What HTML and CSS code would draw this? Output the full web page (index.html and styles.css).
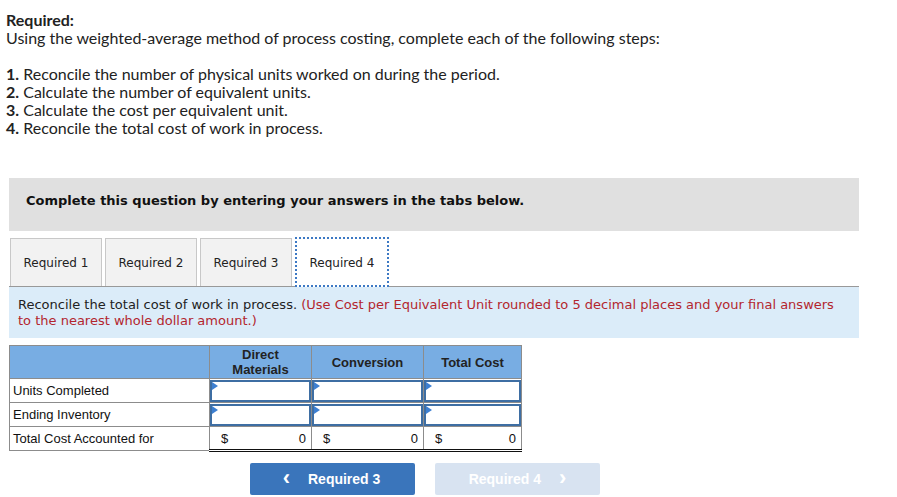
FILE: index.html
```html
<!DOCTYPE html>
<html>
<head>
<meta charset="utf-8">
<link rel="stylesheet" href="styles.css">
</head>
<body>
<div class="intro">
  <p class="req-title">Required:</p>
  <p>Using the weighted-average method of process costing, complete each of the following steps:</p>
  <ol class="steps">
    <li><b>1.</b> Reconcile the number of physical units worked on during the period.</li>
    <li><b>2.</b> Calculate the number of equivalent units.</li>
    <li><b>3.</b> Calculate the cost per equivalent unit.</li>
    <li><b>4.</b> Reconcile the total cost of work in process.</li>
  </ol>
</div>

<div class="panel">
  <div class="banner">Complete this question by entering your answers in the tabs below.</div>
  <div class="tabs">
    <div class="tab">Required 1</div>
    <div class="tab">Required 2</div>
    <div class="tab">Required 3</div>
    <div class="tab active">Required 4</div>
  </div>
  <div class="instructions">Reconcile the total cost of work in process. <span class="hint">(Use Cost per Equivalent Unit rounded to 5 decimal places and your final answers to the nearest whole dollar amount.)</span></div>

  <table class="grid">
    <thead>
      <tr>
        <th class="c-label"></th>
        <th class="c-dm">Direct<br>Materials</th>
        <th class="c-conv">Conversion</th>
        <th class="c-tot">Total Cost</th>
      </tr>
    </thead>
    <tbody>
      <tr>
        <td class="label">Units Completed</td>
        <td class="in"><div class="box"></div></td>
        <td class="in"><div class="box"></div></td>
        <td class="in"><div class="box"></div></td>
      </tr>
      <tr>
        <td class="label">Ending Inventory</td>
        <td class="in"><div class="box"></div></td>
        <td class="in"><div class="box"></div></td>
        <td class="in"><div class="box"></div></td>
      </tr>
      <tr class="total">
        <td class="label">Total Cost Accounted for</td>
        <td class="sum"><div class="money"><span>$</span><span>0</span></div></td>
        <td class="sum"><div class="money"><span>$</span><span>0</span></div></td>
        <td class="sum"><div class="money"><span>$</span><span>0</span></div></td>
      </tr>
    </tbody>
  </table>

  <div class="nav">
    <button class="btn prev"><span class="chev">&lsaquo;</span>Required 3</button>
    <button class="btn next" disabled>Required 4<span class="chev">&rsaquo;</span></button>
  </div>
</div>
</body>
</html>
```

FILE: styles.css
```css
* { box-sizing: border-box; }
body {
  margin: 0;
  background: #fff;
  color: #222;
}
.intro {
  padding: 11px 0 0 6px;
  font-family: Lato, "Open Sans", sans-serif;
  font-size: 16px;
  line-height: 18px;
  color: #222;
}
.intro p { margin: 0; }
.req-title { font-weight: bold; }
.steps {
  list-style: none;
  margin: 18px 0 0 0;
  padding: 0;
}
.steps li { line-height: 18px; }
.panel {
  margin: 41px 0 0 9px;
  width: 850px;
}
.banner {
  background: #e0e0e0;
  height: 53px;
  padding: 15px 0 0 17px;
  font-family: "DejaVu Sans", Verdana, sans-serif;
  font-weight: bold;
  font-size: 13px;
  color: #111;
}
.tabs {
  display: flex;
  gap: 3px;
  margin-top: 7px;
  padding-left: 1px;
  border-bottom: 1px solid #999;
  height: 49px;
}
.tab {
  width: 92px;
  height: 48px;
  padding-top: 1px;
  background: #f2f2f2;
  border: 1px solid #c8c8c8;
  border-bottom: none;
  display: flex;
  align-items: center;
  justify-content: center;
  font-family: "DejaVu Sans", Verdana, sans-serif;
  font-size: 12px;
  color: #222;
}
.tab.active {
  background: #fff;
  width: 94px;
  border: 2px dotted #3d79c4;
  height: 50px;
  margin-top: -1px;
}
.instructions {
  background: #dbecf9;
  padding: 10px 8px 8px 9px;
  font-family: "DejaVu Sans", Verdana, sans-serif;
  font-size: 13px;
  line-height: 16px;
  color: #222;
  height: 51px;
}
.hint { color: #b3262e; }
.grid {
  margin-top: 7px;
  border-collapse: collapse;
  font-family: "Liberation Sans", Arial, sans-serif;
  font-size: 13px;
  color: #111;
}
.grid th {
  background: #78ade3;
  border: 1px solid #8c8c8c;
  height: 33px;
  font-weight: bold;
  line-height: 15px;
  color: #222;
  padding: 0;
}
.c-label { width: 200px; }
.c-dm { width: 102px; }
.c-conv { width: 112px; }
.c-tot { width: 98px; }
.grid td {
  border: 1px solid #8c8c8c;
  padding: 0;
  height: 24px;
}
.grid td.label { padding-left: 3px; }
.grid td.in { padding: 1px 0 0 0; }
.box {
  position: relative;
  height: 22px;
  border: 2px solid #3e6ea3;
  background: #fff;
}
.box::before {
  content: "";
  position: absolute;
  left: 0;
  top: 0;
  border-top: 4px solid transparent;
  border-bottom: 4px solid transparent;
  border-left: 6px solid #3d7fd1;
}
.total td { height: 24px; }
.total td.sum {
  border-top: 1px solid #111;
  border-bottom: 3px double #111;
}
.money {
  display: flex;
  justify-content: space-between;
  padding: 1px 5px 0 11px;
}
.nav {
  display: flex;
  gap: 20px;
  margin: 11px 0 0 241px;
}
.btn {
  width: 165px;
  height: 32px;
  border: none;
  border-radius: 2px;
  font-family: "Liberation Sans", Arial, sans-serif;
  font-weight: bold;
  font-size: 14px;
  color: #fff;
  display: flex;
  align-items: center;
  justify-content: center;
  gap: 18px;
}
.btn.prev { background: #3a75bb; padding-left: 4px; }
.btn.next { background: #d8e3f1; color: #fff; }
.chev { font-size: 22px; line-height: 20px; margin-top: -3px; }
```
